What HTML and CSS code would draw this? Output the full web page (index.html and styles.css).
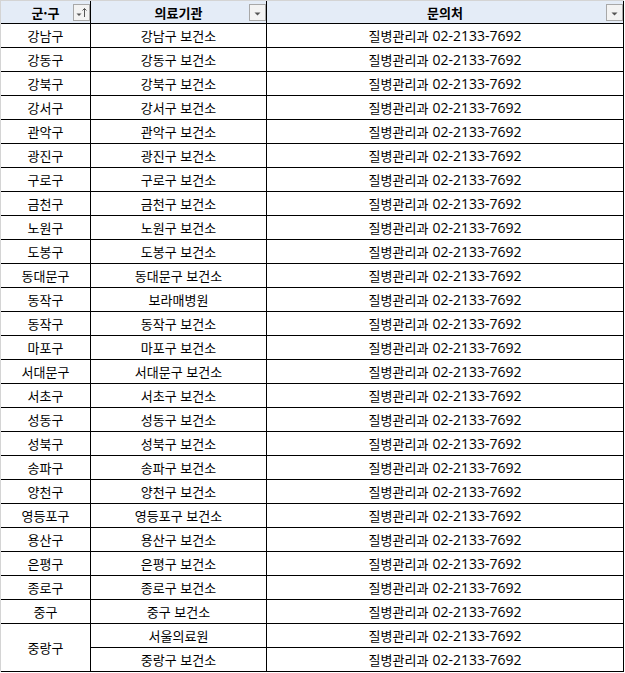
FILE: index.html
```html
<!DOCTYPE html>
<html lang="ko">
<head>
<meta charset="utf-8">
<title>보건소 문의처</title>
<link rel="stylesheet" href="styles.css">
</head>
<body>
<div class="sheet">
  <div class="cell hd">군·구<span class="fbtn"><svg width="15" height="15" viewBox="0 0 15 15"><path d="M2.5 8.5h5l-2.5 2.5z" fill="#555"/><path d="M10.5 3.5v8.5M8.5 5.5l2-2 2 2" stroke="#555" stroke-width="1" fill="none"/></svg></span></div>
  <div class="cell hd">의료기관<span class="fbtn"><svg width="15" height="15" viewBox="0 0 15 15"><path d="M4.5 7.5h6l-3 3z" fill="#555"/></svg></span></div>
  <div class="cell hd">문의처<span class="fbtn"><svg width="15" height="15" viewBox="0 0 15 15"><path d="M4.5 7.5h6l-3 3z" fill="#555"/></svg></span></div>

  <div class="cell">강남구</div><div class="cell">강남구 보건소</div><div class="cell">질병관리과 <span class="num">02-2133-7692</span></div>
  <div class="cell">강동구</div><div class="cell">강동구 보건소</div><div class="cell">질병관리과 <span class="num">02-2133-7692</span></div>
  <div class="cell">강북구</div><div class="cell">강북구 보건소</div><div class="cell">질병관리과 <span class="num">02-2133-7692</span></div>
  <div class="cell">강서구</div><div class="cell">강서구 보건소</div><div class="cell">질병관리과 <span class="num">02-2133-7692</span></div>
  <div class="cell">관악구</div><div class="cell">관악구 보건소</div><div class="cell">질병관리과 <span class="num">02-2133-7692</span></div>
  <div class="cell">광진구</div><div class="cell">광진구 보건소</div><div class="cell">질병관리과 <span class="num">02-2133-7692</span></div>
  <div class="cell">구로구</div><div class="cell">구로구 보건소</div><div class="cell">질병관리과 <span class="num">02-2133-7692</span></div>
  <div class="cell">금천구</div><div class="cell">금천구 보건소</div><div class="cell">질병관리과 <span class="num">02-2133-7692</span></div>
  <div class="cell">노원구</div><div class="cell">노원구 보건소</div><div class="cell">질병관리과 <span class="num">02-2133-7692</span></div>
  <div class="cell">도봉구</div><div class="cell">도봉구 보건소</div><div class="cell">질병관리과 <span class="num">02-2133-7692</span></div>
  <div class="cell">동대문구</div><div class="cell">동대문구 보건소</div><div class="cell">질병관리과 <span class="num">02-2133-7692</span></div>
  <div class="cell">동작구</div><div class="cell">보라매병원</div><div class="cell">질병관리과 <span class="num">02-2133-7692</span></div>
  <div class="cell">동작구</div><div class="cell">동작구 보건소</div><div class="cell">질병관리과 <span class="num">02-2133-7692</span></div>
  <div class="cell">마포구</div><div class="cell">마포구 보건소</div><div class="cell">질병관리과 <span class="num">02-2133-7692</span></div>
  <div class="cell">서대문구</div><div class="cell">서대문구 보건소</div><div class="cell">질병관리과 <span class="num">02-2133-7692</span></div>
  <div class="cell">서초구</div><div class="cell">서초구 보건소</div><div class="cell">질병관리과 <span class="num">02-2133-7692</span></div>
  <div class="cell">성동구</div><div class="cell">성동구 보건소</div><div class="cell">질병관리과 <span class="num">02-2133-7692</span></div>
  <div class="cell">성북구</div><div class="cell">성북구 보건소</div><div class="cell">질병관리과 <span class="num">02-2133-7692</span></div>
  <div class="cell">송파구</div><div class="cell">송파구 보건소</div><div class="cell">질병관리과 <span class="num">02-2133-7692</span></div>
  <div class="cell">양천구</div><div class="cell">양천구 보건소</div><div class="cell">질병관리과 <span class="num">02-2133-7692</span></div>
  <div class="cell">영등포구</div><div class="cell">영등포구 보건소</div><div class="cell">질병관리과 <span class="num">02-2133-7692</span></div>
  <div class="cell">용산구</div><div class="cell">용산구 보건소</div><div class="cell">질병관리과 <span class="num">02-2133-7692</span></div>
  <div class="cell">은평구</div><div class="cell">은평구 보건소</div><div class="cell">질병관리과 <span class="num">02-2133-7692</span></div>
  <div class="cell">종로구</div><div class="cell">종로구 보건소</div><div class="cell">질병관리과 <span class="num">02-2133-7692</span></div>
  <div class="cell">중구</div><div class="cell">중구 보건소</div><div class="cell">질병관리과 <span class="num">02-2133-7692</span></div>
  <div class="cell span2">중랑구</div><div class="cell">서울의료원</div><div class="cell">질병관리과 <span class="num">02-2133-7692</span></div>
  <div class="cell">중랑구 보건소</div><div class="cell">질병관리과 <span class="num">02-2133-7692</span></div>
</div>
</body>
</html>
```

FILE: styles.css
```css
html, body {
  margin: 0;
  padding: 0;
  background: #ffffff;
}

.sheet {
  display: grid;
  grid-template-columns: 90px 176px 357px;
  grid-template-rows: 23px;
  grid-auto-rows: 24px;
  width: 623px;
  border-left: 1px solid #d4d4d4;
  border-top: 1px solid #d4d4d4;
  font-family: "Noto Sans CJK KR", sans-serif;
  font-size: 13px;
  color: #000;
}

.cell {
  position: relative;
  box-sizing: border-box;
  border-right: 1px solid #000;
  border-bottom: 1px solid #000;
  display: flex;
  align-items: center;
  justify-content: center;
  white-space: nowrap;
  line-height: 1;
}

.hd {
  background: #e4ecf7;
  font-weight: bold;
}

.span2 {
  grid-row: span 2;
}

.num {
  font-family: "Open Sans", sans-serif;
  font-size: 14px;
  margin-left: 4px;
}

.fbtn {
  position: absolute;
  right: 0;
  top: 3px;
  width: 17px;
  height: 17px;
  box-sizing: border-box;
  border: 1px solid #a8a8a8;
  background: #f3f3f3;
  display: flex;
}
```
